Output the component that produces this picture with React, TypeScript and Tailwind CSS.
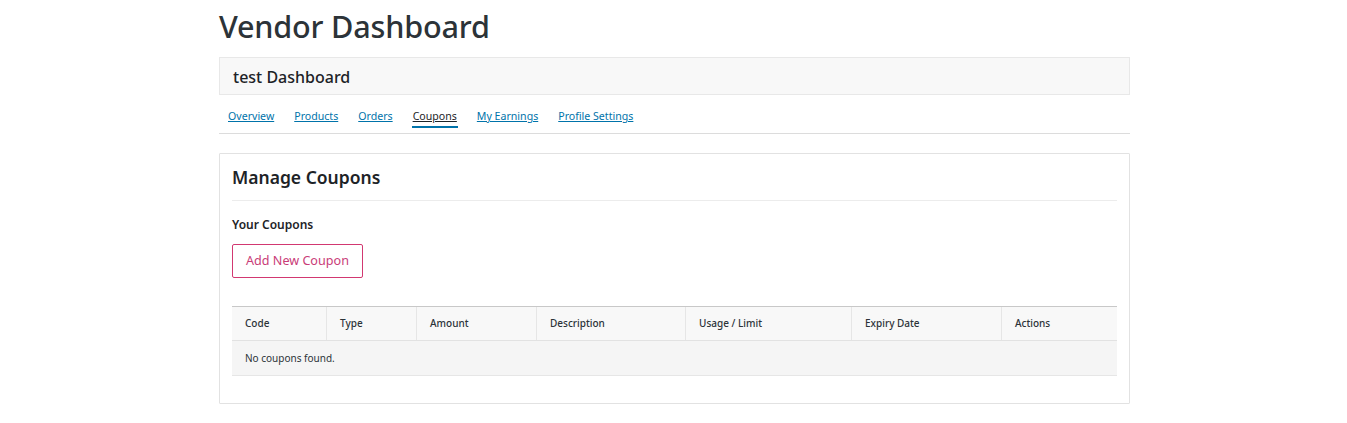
import React from "react";

const tabs = ["Overview", "Products", "Orders", "Coupons", "My Earnings", "Profile Settings"];
const cols: { label: string; w: string }[] = [
  { label: "Code", w: "w-[95px]" },
  { label: "Type", w: "w-[90px]" },
  { label: "Amount", w: "w-[120px]" },
  { label: "Description", w: "w-[149px]" },
  { label: "Usage / Limit", w: "w-[166px]" },
  { label: "Expiry Date", w: "w-[150px]" },
  { label: "Actions", w: "flex-1" },
];

export default function App() {
  return (
    <div className="min-h-[423px] bg-white text-[#2c3338]" style={{ fontFamily: '"Noto Sans", "Open Sans", sans-serif' }}>
      <div className="ml-[219px] w-[911px] pt-[5px]">
        <h1 className="text-[30.6px] leading-[42px] font-medium text-[#2c3338] tracking-[-0.2px]">Vendor Dashboard</h1>
        <div className="mt-[10px] h-[38px] border border-[#e8e8e8] bg-[#f8f8f8] px-[13px] flex items-center">
          <span className="text-[16px] font-medium text-[#1d2327] pt-[2px]">test Dashboard</span>
        </div>
        <nav className="mt-[9px] flex items-end gap-[18px] border-b border-[#dcdcdc] px-[8px] h-[30px]">
          {tabs.map((t) => (
            <a
              key={t}
              href="#"
              className={
                "text-[10.6px] leading-[14px] underline pb-[3px] mb-[5px] border-b-2 px-[1px] " +
                (t === "Coupons" ? "text-[#1d2327] border-[#0073aa]" : "text-[#0073aa] border-transparent")
              }
            >
              {t}
            </a>
          ))}
        </nav>
        <div className="mt-[19px] border border-[#e2e2e2] px-[12px] pt-[10px] pb-[27px] rounded-[1px]">
          <h2 className="text-[17.5px] leading-[26px] font-semibold text-[#1d2327] pb-[10px] border-b border-[#ececec]">Manage Coupons</h2>
          <h3 className="mt-[15px] text-[12px] font-semibold text-[#1d2327] leading-[17px]">Your Coupons</h3>
          <button className="mt-[11px] h-[34px] px-[13px] border border-[#d23871] rounded-[2px] text-[12.6px] text-[#c93c78] bg-white">
            Add New Coupon
          </button>
          <div className="mt-[28px] border-t border-[#c8c8c8]">
            <div className="flex h-[34px] bg-[#f8f8f8] border-b border-[#e2e2e2]">
              {cols.map((c, i) => (
                <div
                  key={c.label}
                  className={
                    c.w +
                    " flex items-center px-[13px] text-[10px] font-medium text-[#2c3338] " +
                    (i < cols.length - 1 ? "border-r border-[#e6e6e6]" : "")
                  }
                >
                  {c.label}
                </div>
              ))}
            </div>
            <div className="h-[35px] bg-[#f5f5f5] border-b border-[#e6e6e6] flex items-center px-[13px] text-[10px] text-[#2c3338]">
              No coupons found.
            </div>
          </div>
        </div>
      </div>
    </div>
  );
}
